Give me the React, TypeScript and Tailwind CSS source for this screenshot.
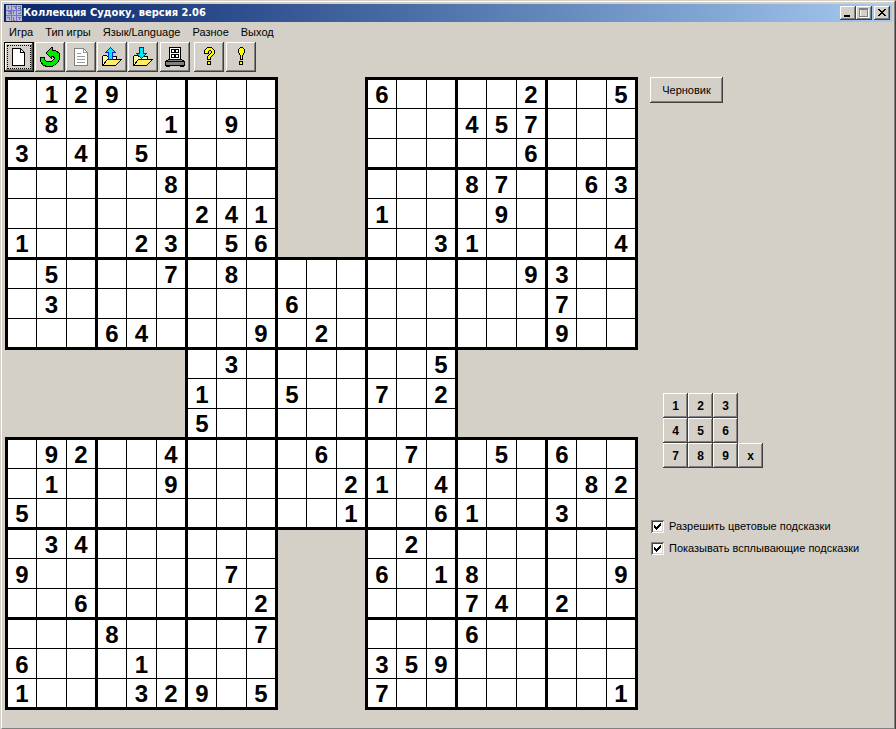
import React, { useState, ReactNode } from 'react';

// '.' is an empty cell, a space lies outside of the board
const PUZZLE = [
  '.129.....   6....2..5',
  '.8...1.9.   ...457...',
  '3.4.5....   .....6...',
  '.....8...   ...87..63',
  '......241   1...9....',
  '1...23.56   ..31....4',
  '.5...7.8.........93..',
  '.3.......6........7..',
  '...64...9.2.......9..',
  '      .3......5      ',
  '      1..5..7.2      ',
  '      5........      ',
  '.92..4....6..7..5.6..',
  '.1...9.....21.4....82',
  '5..........1..61..3..',
  '.34......   .2.......',
  '9......7.   6.18....9',
  '..6.....2   ...74.2..',
  '...8....7   ...6.....',
  '6...1....   359......',
  '1...329.5   7.......1',
];

const RAISED = 'bg-[#d4d0c8] shadow-[inset_-1px_-1px_#404040,inset_1px_1px_#fff,inset_-2px_-2px_#808080]';

const MENU = ['Игра', 'Тип игры', 'Язык/Language', 'Разное', 'Выход'];

const Icon: React.FC<{ children: ReactNode }> = ({ children }) => (
  <svg width="22" height="22" viewBox="0 0 22 22" fill="none" stroke="#000" shapeRendering="crispEdges" aria-hidden="true">
    {children}
  </svg>
);

const PageIcon = () => (
  <Icon>
    <path d="M4.5 2.5h8l4 4v13h-12z" fill="#fff" />
    <path d="M12.5 2.5v4h4" />
  </Icon>
);

const RestartIcon = () => (
  <Icon>
    <path d="M1.5 11.5h4v2l2 2h5l3-3v-1l-2-1h-1v2l-5-5v-1l5-5h1v3h3l4 3v5l-1 3-4 4-3 1h-4l-4-1-3-4z" fill="#00e800" />
  </Icon>
);

const TextPageIcon = () => (
  <Icon>
    <path d="M4.5 2.5h9l4 4v13h-13z" fill="#fff" stroke="#808080" />
    <path d="M13.5 2.5v4h4M7 7.5h4M7 10.5h8M7 13.5h8M7 16.5h8" stroke="#999" />
  </Icon>
);

const FolderIcon: React.FC<{ arrow: string }> = ({ arrow }) => (
  <Icon>
    <path d="M1.5 19.5v-9l1-1h3l1 1h9v3" fill="#ffff99" />
    <path d="M1.5 19.5l5-6h14l-6 6z" fill="#ffee66" />
    <path d={arrow} fill="#00e8ff" stroke="#0028d0" />
  </Icon>
);

const PrinterIcon = () => (
  <Icon>
    <path d="M5.5 1.5h11v12h-11z" fill="#fff" />
    <path d="M7.5 3.5h3v3h-3zM11.5 3.5h3v3h-3zM7.5 8.5h3v3h-3zM11.5 8.5h3v3h-3z" />
    <path d="M4.5 13.5h13l3 2v4h-19v-4z" fill="#808080" />
    <path d="M1 15.5h20M2 20.5h4M16 20.5h4" />
  </Icon>
);

const QuestionIcon = () => (
  <Icon>
    <path d="M6.5 4.5l3-3h4l3 3v3l-4 4v2h-3v-3l4-4v-1l-1-1h-1l-1 1v2h-4z" fill="#ffff00" />
    <path d="M9.5 15.5h3v3h-3z" fill="#ffff00" />
  </Icon>
);

const ExclamationIcon = () => (
  <Icon>
    <path d="M8.5 3.5l2-2h2l2 2v3l-2 3v4h-2v-4l-2-3z" fill="#ffff00" />
    <path d="M9.5 15.5h3v3h-3z" fill="#ffff00" />
  </Icon>
);

const AppIcon = () => (
  <svg width="16" height="16" viewBox="0 0 16 16" shapeRendering="crispEdges" aria-hidden="true">
    <path d="M0 0h16v16H0z" fill="#b8b8d4" />
    <path d="M0 5.5h16M0 10.5h16M5.5 0v16M10.5 0v16" stroke="#7474d0" />
    <path d="M2.5 1v3M7 1.5h2v2M12 1.5h2v2h-2M14.5 1v4M2 6.5h2v2h-2M7.5 6v3M12 8.5h2v-2M1 12.5h2v2M7 12v3h2M12 12.5h3M13.5 12v3" stroke="#76768c" fill="none" />
  </svg>
);

const ToolButton: React.FC<{ label: string; focused?: boolean; children: ReactNode }> = ({ label, focused, children }) => (
  <button
    title={label}
    aria-label={label}
    className={`flex h-[30px] w-[30px] items-center justify-center ${RAISED} ${focused ? 'border border-black p-[2px]' : ''}`}
  >
    {focused ? <span className="flex h-6 w-6 items-center justify-center border border-dotted border-black">{children}</span> : children}
  </button>
);

const Board = () => (
  <table className="table-fixed w-[633px] shrink-0 border-collapse">
    <tbody>
      {PUZZLE.map((row, r) => (
        <tr key={r} className="h-[30px]">
          {row.split('').map((value, c) => {
            if (value === ' ') return <td key={c} className="p-0" />;
            const edges = [
              r % 3 === 0 ? 'border-t-3' : 'border-t',
              c % 3 === 0 ? 'border-l-3' : 'border-l',
              r % 3 === 2 ? 'border-b-3' : 'border-b',
              c % 3 === 2 ? 'border-r-3' : 'border-r',
            ];
            return (
              <td key={c} className={`border-black bg-white p-0 pt-[2px] text-center text-2xl leading-6 font-bold ${edges.join(' ')}`}>
                {value === '.' ? '' : value}
              </td>
            );
          })}
        </tr>
      ))}
    </tbody>
  </table>
);

const CheckOption: React.FC<{ label: string; checked: boolean; onChange: (value: boolean) => void }> = ({ label, checked, onChange }) => (
  <label className="flex h-[22px] items-center gap-[5px] whitespace-nowrap">
    <span className="relative h-[13px] w-[13px]">
      <input
        type="checkbox"
        checked={checked}
        onChange={(e) => onChange(e.target.checked)}
        className="block h-[13px] w-[13px] appearance-none bg-white shadow-[inset_1px_1px_#808080,inset_-1px_-1px_#fff,inset_2px_2px_#404040,inset_-2px_-2px_#d4d0c8]"
      />
      {checked && (
        <svg width="13" height="13" viewBox="0 0 13 13" shapeRendering="crispEdges" className="pointer-events-none absolute inset-0">
          <path d="M3 5h1v1h1v1h1v-1h1v-1h1v-1h1v-1h1v3h-1v1h-1v1h-1v1h-1v1h-1v-1h-1v-1h-1z" />
        </svg>
      )}
    </span>
    {label}
  </label>
);

const App: React.FC = () => {
  const [colorHints, setColorHints] = useState(true);
  const [popupHints, setPopupHints] = useState(true);

  return (
    <div className="min-h-screen border border-t-[#d4d0c8] border-r-[#404040] border-b-[#404040] border-l-[#d4d0c8] bg-[#d4d0c8] font-['Liberation_Sans',Arial,sans-serif] text-[11px] text-black">
      <div className="flex min-h-[calc(100vh-2px)] flex-col border border-t-white border-r-[#808080] border-b-[#808080] border-l-white p-[2px]">
        <header className="flex h-[18px] items-center gap-px bg-linear-to-r from-[#0a246a] to-[#a6caf0] px-[2px]">
          <AppIcon />
          <h1 className="grow font-['DejaVu_Sans_Condensed','DejaVu_Sans',sans-serif] text-[11px] font-bold whitespace-nowrap text-white">Коллекция Судоку, версия 2.06</h1>
          <div className="flex">
            <button aria-label="Свернуть" className={`h-[14px] w-4 ${RAISED}`}>
              <svg width="16" height="14" shapeRendering="crispEdges"><path d="M4 9h6v2h-6z" /></svg>
            </button>
            <button aria-label="Развернуть" className={`mr-[2px] h-[14px] w-4 ${RAISED}`}>
              <svg width="16" height="14" shapeRendering="crispEdges" fill="none">
                <path d="M4.5 3v8.5h8v-9M4 3h9" stroke="#fff" />
                <path d="M3.5 2.5h8v8h-8zM3 3.5h9" stroke="#808080" />
              </svg>
            </button>
            <button aria-label="Закрыть" className={`h-[14px] w-4 ${RAISED}`}>
              <svg width="16" height="14" shapeRendering="crispEdges">
                <path d="M4 3h2v1h1v1h2v-1h1v-1h2v1h-1v1h-1v1h-1v1h1v1h1v1h1v1h-2v-1h-1v-1h-2v1h-1v1h-2v-1h1v-1h1v-1h1v-1h-1v-1h-1v-1h-1z" />
              </svg>
            </button>
          </div>
        </header>

        <nav className="flex h-5 items-center gap-3 px-[5px]">
          {MENU.map((item) => (
            <button key={item} className="whitespace-nowrap">{item}</button>
          ))}
        </nav>

        <div className="flex gap-[2px]">
          <div className="flex gap-px">
            <ToolButton label="Новая игра" focused><PageIcon /></ToolButton>
            <ToolButton label="Начать заново"><RestartIcon /></ToolButton>
            <ToolButton label="Условие"><TextPageIcon /></ToolButton>
            <ToolButton label="Загрузить"><FolderIcon arrow="M9.5 1.5l5 5h-3v7h-4v-7h-3z" /></ToolButton>
            <ToolButton label="Сохранить"><FolderIcon arrow="M7.5 1.5h4v6h3l-5 5-5-5h3z" /></ToolButton>
          </div>
          <ToolButton label="Печать"><PrinterIcon /></ToolButton>
          <div className="flex gap-[2px] pl-[2px]">
            <ToolButton label="Справка"><QuestionIcon /></ToolButton>
            <ToolButton label="О программе"><ExclamationIcon /></ToolButton>
          </div>
        </div>

        <main className="flex grow gap-3 px-px pt-[5px] pb-4">
          <Board />
          <aside className="flex flex-col items-start">
            <button className={`h-[26px] w-[73px] ${RAISED}`}>Черновик</button>
            <div className="mt-[290px] flex flex-col gap-[47px] pl-px">
              <div className="ml-3 grid grid-cols-[repeat(4,25px)]">
                {['1', '2', '3', '4', '5', '6', '7', '8', '9', 'x'].map((key) => (
                  <button
                    key={key}
                    className={`h-[25px] text-xs font-bold ${RAISED} ${key === '4' || key === '7' ? 'col-start-1' : ''}`}
                  >
                    {key}
                  </button>
                ))}
              </div>
              <div>
                <CheckOption label="Разрешить цветовые подсказки" checked={colorHints} onChange={setColorHints} />
                <CheckOption label="Показывать всплывающие подсказки" checked={popupHints} onChange={setPopupHints} />
              </div>
            </div>
          </aside>
        </main>
      </div>
    </div>
  );
};

export default App;
